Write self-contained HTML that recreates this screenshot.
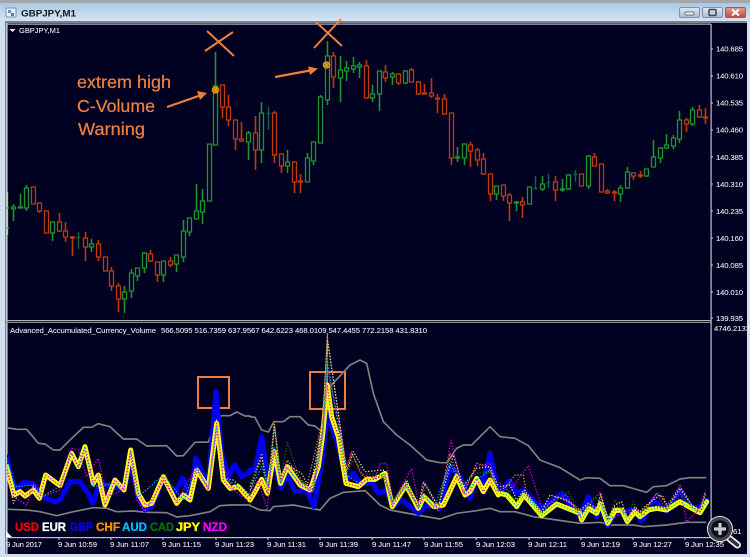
<!DOCTYPE html>
<html><head><meta charset="utf-8"><style>
html,body{margin:0;padding:0;background:#000020;width:750px;height:557px;overflow:hidden}
svg{display:block;filter:blur(.25px)}
text{font-family:"Liberation Sans",sans-serif}
.ax{font-size:7.7px;fill:#e8e8e8;stroke:#e8e8e8;stroke-width:.1px}
.lg{font-size:11.5px;font-weight:bold;stroke-width:.35px}
.an{font-size:17.5px;fill:#ee7f3e;stroke:#ee7f3e;stroke-width:.25px}
</style></head><body>
<svg width="750" height="557" viewBox="0 0 750 557" xmlns="http://www.w3.org/2000/svg">
<defs>
<linearGradient id="tb" x1="0" y1="0" x2="0" y2="1"><stop offset="0" stop-color="#a9c8e4"/><stop offset="1" stop-color="#d6e6f3"/></linearGradient>
<linearGradient id="bt" x1="0" y1="0" x2="0" y2="1"><stop offset="0" stop-color="#dde8f2"/><stop offset="1" stop-color="#a5bcd3"/></linearGradient>
<linearGradient id="cl" x1="0" y1="0" x2="0" y2="1"><stop offset="0" stop-color="#e29a8c"/><stop offset="1" stop-color="#c1493c"/></linearGradient>
<clipPath id="sub"><rect x="7" y="323" width="704" height="214"/></clipPath>
</defs>
<rect width="750" height="557" fill="#cfe1f0"/>
<rect width="750" height="3" fill="#a6a6a6"/>
<rect y="3" width="750" height="18" fill="url(#tb)"/>
<rect x="5" y="21" width="742" height="533" fill="#77828e"/>
<rect x="6" y="23" width="741" height="531" fill="#000020"/>
<rect x="6" y="23" width="1.6" height="531" fill="#c4c8cc"/>
<rect x="6" y="23.5" width="705" height="1.2" fill="#b8bcc0"/>
<!-- title -->
<rect x="6" y="8" width="10" height="9" rx="1" fill="#e8f2fa" stroke="#6f93b8" stroke-width="1"/><rect x="8" y="10" width="3" height="3" fill="#6f93b8"/><rect x="11" y="13" width="3" height="3" fill="#4c78a8"/>
<text x="21" y="16.5" font-size="9.6" font-weight="bold" fill="#15181c" textLength="55" lengthAdjust="spacingAndGlyphs">GBPJPY,M1</text>
<rect x="679.500" y="7.500" width="20" height="10" rx="1.500" fill="url(#bt)" stroke="#7d93aa"/><rect x="685" y="12" width="9" height="3" rx="1" fill="#f2f2f2" stroke="#4c5560" stroke-width=".7"/>
<rect x="702.500" y="7.500" width="20" height="10" rx="1.500" fill="url(#bt)" stroke="#7d93aa"/><rect x="709" y="9.500" width="7" height="6" rx="1" fill="none" stroke="#3e4650" stroke-width="1.500"/>
<rect x="725.500" y="7.500" width="20" height="10" rx="1.500" fill="url(#cl)" stroke="#a8584e"/><path d="M732 9.500l7 6M739 9.500l-7 6" stroke="#fff" stroke-width="2"/>
<!-- panel lines -->
<rect x="6" y="320" width="705" height="1.2" fill="#b0b4b8"/><rect x="6" y="322" width="705" height="1" fill="#8a8e92"/>
<rect x="710.500" y="24" width="1.200" height="513" fill="#c0c4c8"/>
<rect x="7" y="537" width="704" height="1.200" fill="#c0c4c8"/>
<path d="M6 537l0-6 6 6z" fill="#fff"/>
<!-- top label -->
<path d="M9.500 29h6l-3 3z" fill="#fff"/>
<text x="19" y="33.200" class="ax" textLength="41" lengthAdjust="spacingAndGlyphs">GBPJPY,M1</text>
<!-- candles -->
<g fill="#000020" stroke-width="1.300">
<path stroke="#1f9432" stroke-width="1.600" d="M13.500 204V221M20.500 194V208M26.500 185V211M52.500 222V241M91.500 239V252M124.500 286V313M131.500 269V298M137.500 268V281M144.500 252V273M163.500 261V282M176.500 255V272M183.500 220V262M189.500 218V236M196.500 184V219M202.500 189V224M209.500 144V201M215.500 52V145M248.500 131V160M261.500 102V163M287.500 150V173M307.500 153V182M313.500 142V165M320.500 95V143M327.500 41V105M340.500 56V102M346.500 61V81M353.500 57V73M359.500 62V78M372.500 85V102M379.500 71V111M392.500 72V85M405.500 70V84M457.500 147V162M464.500 144V165M496.500 186V200M516.500 201V211M529.500 187V204M542.500 176V191M562.500 179V192M568.500 174V190M588.500 155V189M620.500 185V202M627.500 167V188M646.500 169V177M653.500 140V167M660.500 147V163M666.500 134V149M673.500 135V149M679.500 111V143M692.500 107V126"/>
<path stroke="#1f9432" d="M11.500 207h4v2h-4zM18.500 207h4v1h-4zM24.500 188h4v20h-4zM50.500 222h4v11h-4zM89.500 244h4v3h-4zM122.500 292h4v7h-4zM129.500 273h4v18h-4zM135.500 268h4v8h-4zM142.500 253h4v15h-4zM161.500 261h4v14h-4zM174.500 255h4v9h-4zM181.500 231h4v26h-4zM187.500 218h4v14h-4zM194.500 211h4v8h-4zM200.500 201h4v11h-4zM207.500 144h4v57h-4zM213.500 86h4v59h-4zM246.500 133h4v9h-4zM259.500 113h4v37h-4zM285.500 162h4v4h-4zM305.500 158h4v24h-4zM311.500 142h4v19h-4zM318.500 97h4v46h-4zM325.500 56h4v44h-4zM338.500 70h4v8h-4zM344.500 68h4v3h-4zM351.500 66h4v3h-4zM357.500 65h4v2h-4zM370.500 94h4v4h-4zM377.500 71h4v23h-4zM390.500 74h4v3h-4zM403.500 71h4v12h-4zM455.500 157h4v1h-4zM462.500 144h4v14h-4zM494.500 186h4v8h-4zM514.500 202h4v1h-4zM527.500 187h4v17h-4zM540.500 184h4v5h-4zM560.500 189h4v1h-4zM566.500 175h4v14h-4zM586.500 156h4v30h-4zM618.500 188h4v6h-4zM625.500 172h4v16h-4zM644.500 169h4v7h-4zM651.500 157h4v10h-4zM658.500 148h4v10h-4zM664.500 145h4v3h-4zM671.500 138h4v8h-4zM677.500 120h4v19h-4zM690.500 110h4v14h-4z"/>
<path stroke="#8fe88f" stroke-width="1.300" d="M7.500 192V235"/><path stroke="#2fb040" d="M6.500 208H9M6.500 228H9" />
<path stroke="#126045" stroke-width="1.500" d="M78.500 232V249M76.500 237.500h4M268.500 107V130M266.500 113.500h4M535.500 176V189M533.500 188.500h4M548.500 174V188M546.500 182.500h4M575.500 170V182M573.500 174.500h4"/>
<path stroke="#c23a0c" stroke-width="1.600" d="M39.500 203V213M59.500 213V232M65.500 222V242M72.500 236V256M85.500 232V261M98.500 240V261M111.500 267V291M118.500 283V312M150.500 250V262M157.500 262V282M170.500 257V267M222.500 85V118M228.500 95V126M235.500 120V150M241.500 122V142M255.500 116V170M274.500 111V163M281.500 154V173M294.500 162V193M300.500 174V193M333.500 52V88M366.500 60V99M385.500 65V82M398.500 73V85M411.500 68V82M418.500 81V95M424.500 84V94M431.500 78V98M437.500 94V113M444.500 94V115M451.500 113V165M470.500 142V167M477.500 148V166M483.500 153V175M490.500 174V201M503.500 185V201M509.500 193V221M522.500 197V218M555.500 176V201M594.500 153V166M607.500 189V194M614.500 190V201M633.500 172V180M640.500 171V178M686.500 118V132M699.500 105V118M705.500 108V124"/>
<path stroke="#c23a0c" d="M31.500 187h4v17h-4zM37.500 203h4v8h-4zM44.500 211h4v22h-4zM57.500 222h4v9h-4zM63.500 231h4v6h-4zM70.500 237h4v1h-4zM83.500 238h4v9h-4zM96.500 244h4v13h-4zM103.500 257h4v14h-4zM109.500 271h4v15h-4zM116.500 286h4v13h-4zM148.500 254h4v7h-4zM155.500 262h4v13h-4zM168.500 261h4v4h-4zM220.500 85h4v22h-4zM226.500 107h4v13h-4zM233.500 120h4v19h-4zM239.500 139h4v2h-4zM253.500 133h4v17h-4zM272.500 113h4v42h-4zM279.500 154h4v12h-4zM292.500 162h4v20h-4zM298.500 181h4v1h-4zM331.500 56h4v21h-4zM364.500 66h4v32h-4zM383.500 72h4v6h-4zM396.500 74h4v9h-4zM409.500 70h4v12h-4zM416.500 82h4v12h-4zM422.500 93h4v1h-4zM429.500 93h4v3h-4zM435.500 98h4v1h-4zM442.500 99h4v15h-4zM449.500 113h4v45h-4zM468.500 145h4v6h-4zM475.500 150h4v10h-4zM481.500 159h4v15h-4zM488.500 174h4v20h-4zM501.500 185h4v11h-4zM507.500 195h4v8h-4zM520.500 202h4v3h-4zM553.500 182h4v8h-4zM579.500 174h4v12h-4zM592.500 157h4v9h-4zM599.500 164h4v28h-4zM605.500 191h4v2h-4zM612.500 192h4v1h-4zM631.500 173h4v3h-4zM638.500 175h4v1h-4zM684.500 120h4v4h-4zM697.500 110h4v7h-4zM703.500 117h4v1h-4z"/>
</g>
<!-- gold markers -->
<circle cx="215.500" cy="90" r="3.800" fill="#d99b10"/><circle cx="326.500" cy="65" r="3.800" fill="#d99b10"/>
<g fill="none" stroke="#6a4a08" stroke-width="1" stroke-dasharray="1 2"><circle cx="215.500" cy="90" r="2"/><circle cx="326.500" cy="65" r="2"/></g>
<!-- annotations -->
<g stroke="#ee7f3e" stroke-width="2" fill="none">
<path d="M205 51L233 32M207 31L234 56M314 48L341 19M316 22L342 46"/>
<path d="M167 107L200 95.500" stroke-width="2.200"/><path d="M275 77L310 70.500" stroke-width="2.200"/>
<rect x="198" y="377" width="31" height="31"/><rect x="310" y="372" width="35" height="37"/>
</g>
<path d="M207 93L197 91L200 100zM318 68.500L308 66.500L310 75z" fill="#ee7f3e"/>
<text x="77" y="88" class="an" textLength="94" lengthAdjust="spacingAndGlyphs">extrem high</text>
<text x="77" y="112" class="an" textLength="78" lengthAdjust="spacingAndGlyphs">C-Volume</text>
<text x="78" y="135" class="an" textLength="67" lengthAdjust="spacingAndGlyphs">Warning</text>
<!-- axis labels -->
<g class="ax">
<text x="716" y="51.500" textLength="27">140.685</text><text x="716" y="78.500" textLength="27">140.610</text><text x="716" y="105.500" textLength="27">140.535</text><text x="716" y="132.500" textLength="27">140.460</text><text x="716" y="160" textLength="27">140.385</text><text x="716" y="187" textLength="27">140.310</text><text x="716" y="214" textLength="27">140.235</text><text x="716" y="241" textLength="27">140.160</text><text x="716" y="268" textLength="27">140.085</text><text x="716" y="295" textLength="27">140.010</text><text x="716" y="321" textLength="27">139.935</text>
<text x="714" y="331" textLength="36">4746.2133</text>
<text x="733" y="534">61</text>
<text x="10" y="333" textLength="146">Advanced_Accumulated_Currency_Volume</text>
<text x="161" y="333" textLength="266">566.5095 516.7359 637.9567 642.6223 468.0109 547.4455 772.2158 431.8310</text>
<text x="6" y="547" textLength="36">9 Jun 2017</text>
<text x="58" y="547" textLength="39">9 Jun 10:59</text><text x="110" y="547" textLength="39">9 Jun 11:07</text><text x="162" y="547" textLength="39">9 Jun 11:15</text><text x="215" y="547" textLength="39">9 Jun 11:23</text><text x="267" y="547" textLength="39">9 Jun 11:31</text><text x="319" y="547" textLength="39">9 Jun 11:39</text><text x="372" y="547" textLength="39">9 Jun 11:47</text><text x="424" y="547" textLength="39">9 Jun 11:55</text><text x="476" y="547" textLength="39">9 Jun 12:03</text><text x="528" y="547" textLength="39">9 Jun 12:11</text><text x="581" y="547" textLength="39">9 Jun 12:19</text><text x="633" y="547" textLength="39">9 Jun 12:27</text><text x="685" y="547" textLength="39">9 Jun 12:35</text>
</g>
<path stroke="#d8d8d8" d="M711 49h2M711 76h2M711 103h2M711 130h2M711 157h2M711 184h2M711 211h2M711 238h2M711 265h2M711 292h2M711 318h2M59 538v2M111 538v2M163 538v2M216 538v2M268 538v2M320 538v2M372 538v2M424 538v2M476 538v2M529 538v2M581 538v2M633 538v2M685 538v2"/>
<!-- indicator -->
<g clip-path="url(#sub)" fill="none" stroke-linejoin="round" stroke-linecap="round">
<g transform="translate(0,320) scale(.33333)">
<polyline stroke="#808080" stroke-width="5" points="20,323 50,328 80,328 115,370 135,372 160,390 180,390 215,355 250,322 275,322 295,311 330,320 370,357 410,357 440,378 500,377 530,408 550,407 585,367 625,366 650,298 665,287 690,287 710,276 735,288 750,288"/>
<polyline stroke="#808080" stroke-width="5" points="20,568 80,570 120,575 170,587 220,575 280,563 320,565 350,575 400,573 440,577 500,578 530,591 570,587 630,575 660,557 690,555 750,555"/>
<polyline stroke="#0000f0" stroke-width="15" points="20,410 35,480 50,510 70,488 100,490 125,530 165,545 180,540 210,485 240,485 265,520 278,550 300,490 340,500 372,510 392,430 415,530 435,570 455,560 490,475 520,525 548,475 570,530 588,415 625,495 648,215 665,400 685,470 705,435 725,470 750,455"/>
<polyline stroke="#ffff00" stroke-width="15" points="20,440 30,480 42,525 60,515 75,528 100,510 118,535 137,465 180,497 215,400 235,440 255,380 280,490 295,465 315,555 345,480 372,510 392,390 415,520 435,555 455,550 490,470 530,550 550,525 570,540 590,450 625,505 650,310 670,480 690,505 715,500 750,540"/>
<g stroke-width="3.600" stroke-dasharray="4 5" stroke-linecap="butt">
<polyline stroke="#e000e0" points="20,450 40,530 80,555 100,490 130,530 180,510 215,385 235,390 260,470 295,415 320,530 370,510 392,400 410,540 435,575 490,480 530,545 590,440 625,510 650,330 670,440 700,510 750,545"/>
<polyline stroke="#00b8f0" points="20,415 45,500 100,495 125,530 180,500 215,400 235,445 255,390 280,500 345,490 370,510 392,395 415,530 490,465 550,540 590,445 625,500 650,320 670,475 700,490 750,530"/>
<polyline stroke="#d0d0d0" points="20,470 30,490 40,550 60,515 75,530 100,500 118,535 137,460 180,490 215,395 235,440 255,385 280,495 295,460 315,550 345,475 372,505 392,400 415,515 435,550 455,545 490,465 530,545 550,520 570,540 590,455 625,500 650,300 670,475 700,480 750,525"/>
<polyline stroke="#e000e0" points="20,440 30,480 42,525 60,515 75,528 100,510 118,535 137,465 180,497 215,400 235,440 255,380 280,490 295,465 315,555 345,480 372,510 392,390 415,520 435,555 455,550 490,470 530,550 550,525 570,540 590,450 625,505 650,310 670,480 690,505 715,500 750,540"/>
</g></g>
<g transform="translate(250,320) scale(.33333)">
<polyline stroke="#808080" stroke-width="5" points="0,290 15,292 35,330 55,336 72,305 100,305 120,290 150,290 175,315 195,318 215,335 240,200 300,135 330,120 350,130 370,220 400,305 440,345 480,375 530,420 570,428 590,428 620,385 640,375 665,375 720,320 750,350"/>
<polyline stroke="#808080" stroke-width="5" points="0,557 30,570 60,572 70,560 130,555 165,562 210,570 240,535 280,517 345,512 390,555 420,570 500,585 570,597 620,580 680,572 720,565 750,575"/>
<polyline stroke="#b0b0b0" stroke-width="3" points="232,40 232,200"/>
<polyline stroke="#0000f0" stroke-width="15" points="0,450 15,450 35,350 55,490 73,420 92,505 112,465 135,515 170,510 192,560 215,430 232,280 265,380 290,480 310,460 330,490 370,490 385,520 410,510 427,560 455,540 505,580 530,555 570,565 600,440 630,470 660,535 680,475 700,490 720,400 745,520"/>
<polyline stroke="#ffff00" stroke-width="15" points="0,540 15,515 35,478 52,520 73,395 92,490 112,440 150,495 180,510 205,440 218,345 232,195 245,290 265,350 288,490 325,500 350,478 375,478 405,460 427,560 468,495 505,565 522,530 552,560 580,555 620,470 645,525 660,515 680,475 700,515 720,480 745,525"/>
<g stroke-width="3.600" stroke-dasharray="4 5" stroke-linecap="butt">
<polyline stroke="#e000e0" points="0,530 25,480 52,570 73,310 92,490 112,420 150,480 185,520 218,320 232,150 265,300 290,440 305,395 330,460 375,475 390,430 410,430 427,550 485,445 505,550 525,490 565,575 603,360 640,520 680,440 720,430 745,520"/>
<polyline stroke="#f09000" points="0,500 35,400 52,520 73,305 92,480 112,420 170,500 218,300 232,50 265,280 290,450 305,400 340,470 400,470 427,550 465,490 505,560 525,490 565,560 600,400 640,520 680,430 715,440 745,510"/>
<polyline stroke="#d8d8d8" points="0,510 35,410 55,510 73,320 92,470 112,435 155,460 180,510 218,310 232,60 268,300 290,460 310,395 345,455 400,450 427,560 470,480 505,560 520,485 565,560 610,405 640,500 680,445 720,440 745,500"/>
<polyline stroke="#007800" points="0,490 35,425 55,500 73,330 92,480 112,365 150,480 190,510 218,330 232,110 265,330 290,460 310,420 350,460 400,465 427,545 470,490 505,560 530,500 565,555 600,420 640,490 680,460 715,455 745,505"/>
<polyline stroke="#00b8f0" points="0,515 35,440 55,505 73,380 92,490 112,445 150,490 190,515 218,350 232,130 270,340 290,465 325,490 375,475 405,470 427,550 468,500 505,565 522,520 552,565 600,430 645,520 680,480 720,450 745,515"/>
<polyline stroke="#e000e0" points="0,540 15,515 35,478 52,520 73,395 92,490 112,440 150,495 180,510 205,440 218,345 232,195 245,290 265,350 288,490 325,500 350,478 375,478 405,460 427,560 468,495 505,565 522,530 552,560 580,555 620,470 645,525 660,515 680,475 700,515 720,480 745,525"/>
</g></g>
<g transform="translate(500,320) scale(.33333)">
<polyline stroke="#808080" stroke-width="5" points="0,350 45,355 85,377 120,420 180,443 240,480 260,473 300,475 330,497 370,497 440,517 460,500 500,497 540,477 570,473 617,473"/>
<polyline stroke="#808080" stroke-width="5" points="0,575 45,575 100,590 150,597 240,610 300,607 330,615 400,615 430,620 500,615 560,607 617,607"/>
<polyline stroke="#0000f0" stroke-width="15" points="0,520 28,482 50,520 70,510 125,565 185,520 240,590 265,530 290,590 302,560 323,617 345,580 400,570 425,605 460,540 500,575 540,510 575,565 600,560 620,540"/>
<polyline stroke="#ffff00" stroke-width="15" points="0,520 20,525 50,560 72,525 125,587 170,552 240,580 245,600 265,565 290,580 302,550 323,610 345,572 365,570 382,605 405,575 420,590 445,570 470,565 500,570 540,545 575,565 600,578 620,545"/>
<g stroke-width="3.600" stroke-dasharray="4 5" stroke-linecap="butt">
<polyline stroke="#e000e0" points="0,490 30,515 60,470 85,437 125,560 200,525 240,590 300,515 323,600 400,565 430,585 470,520 500,570 540,510 560,605 600,565 617,512"/>
<polyline stroke="#f09000" points="0,510 20,500 45,465 70,465 80,530 125,575 170,530 205,545 240,575 265,555 290,570 302,530 323,600 345,560 365,565 382,595 405,565 420,580 445,555 470,520 490,530 500,560 540,497 575,555 600,570 617,525"/>
<polyline stroke="#d8d8d8" points="0,500 30,495 50,540 72,510 125,575 150,525 200,540 240,570 265,550 290,565 302,520 323,595 345,555 365,545 382,595 405,560 420,575 440,555 480,525 505,560 540,505 575,555 600,570 615,520"/>
<polyline stroke="#007800" points="0,515 20,510 50,545 72,515 125,580 170,540 205,515 240,585 265,555 280,535 302,540 323,600 345,540 365,565 385,590 400,545 420,580 445,560 470,560 500,565 540,520 575,560 600,575 617,535"/>
<polyline stroke="#00b8f0" points="0,520 20,525 50,560 72,525 125,587 170,552 240,580 245,600 265,565 290,580 302,550 323,610 345,572 365,570 382,605 405,575 420,590 445,570 470,565 500,570 540,545 575,565 600,578 620,545"/>
</g></g>
</g>
<!-- legend -->
<g class="lg">
<text x="15" y="531" fill="#f00000" stroke="#f00000" textLength="24" lengthAdjust="spacingAndGlyphs">USD</text>
<text x="42" y="531" fill="#ffffff" stroke="#ffffff" textLength="24" lengthAdjust="spacingAndGlyphs">EUR</text>
<text x="70" y="531" fill="#0000f0" stroke="#0000f0" textLength="23" lengthAdjust="spacingAndGlyphs">GBP</text>
<text x="96" y="531" fill="#f09000" stroke="#f09000" textLength="24" lengthAdjust="spacingAndGlyphs">CHF</text>
<text x="122" y="531" fill="#00b8f0" stroke="#00b8f0" textLength="25" lengthAdjust="spacingAndGlyphs">AUD</text>
<text x="150" y="531" fill="#007000" stroke="#007000" textLength="24" lengthAdjust="spacingAndGlyphs">CAD</text>
<text x="176" y="531" fill="#ffff00" stroke="#ffff00" textLength="24" lengthAdjust="spacingAndGlyphs">JPY</text>
<text x="203" y="531" fill="#f000f0" stroke="#f000f0" textLength="24" lengthAdjust="spacingAndGlyphs">NZD</text>
</g>
<!-- magnifier -->
<path d="M730 539L737.500 545" stroke="#f2f2f2" stroke-width="7" stroke-linecap="round"/>
<path d="M730 539L737.500 545" stroke="#333" stroke-width="3.500" stroke-linecap="round"/>
<circle cx="720" cy="529" r="11" fill="#0b0d22" stroke="#f2f2f2" stroke-width="4"/>
<circle cx="720" cy="529" r="10.500" fill="none" stroke="#444" stroke-width="3.200"/>
<path d="M720 523v12M714 529h12" stroke="#c8c8c8" stroke-width="3.200"/>
</svg>
</body></html>
